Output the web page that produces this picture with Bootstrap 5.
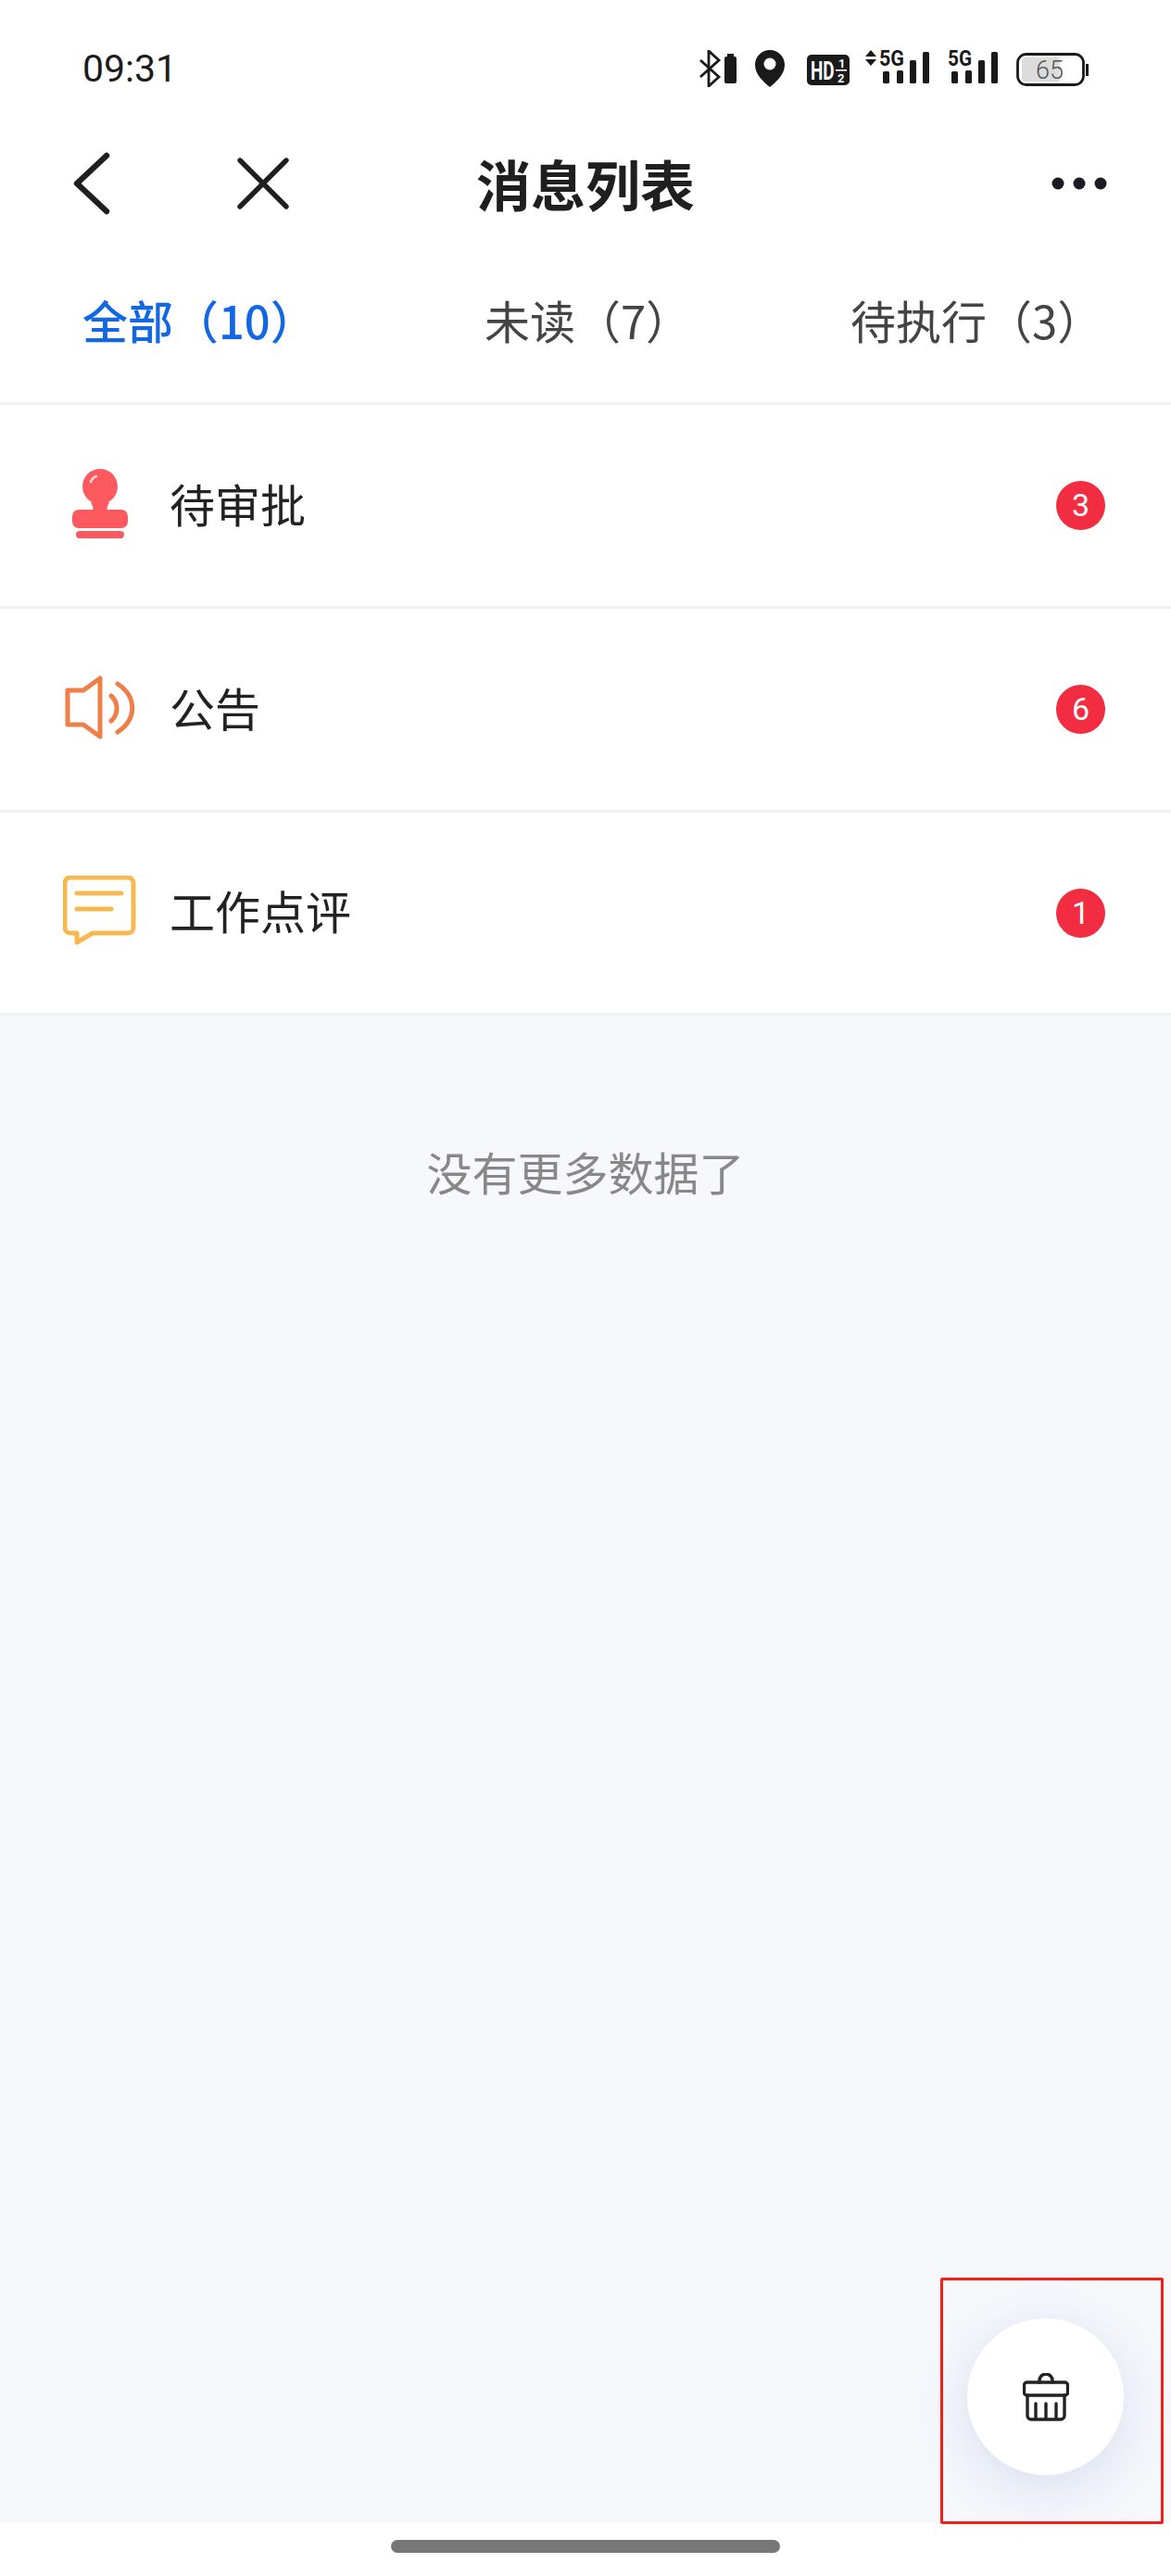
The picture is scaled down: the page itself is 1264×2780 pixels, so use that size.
<!DOCTYPE html>
<html lang="zh-CN">
<head>
    <meta charset="UTF-8">
    <meta name="viewport" content="width=device-width, initial-scale=1.0">
    <title>消息列表</title>
    <link href="https://cdn.jsdelivr.net/npm/bootstrap@5.3.0/dist/css/bootstrap.min.css" rel="stylesheet">
    <style>
        body {
            margin: 0;
            background-color: #fff;
            font-family: "Noto Sans CJK SC", "Noto Sans", sans-serif;
        }
        .phone-page { width: 1264px; height: 2780px; }
        .status-strip { height: 130px; padding: 54px 89px 0; }
        .status-time { font-family: Roboto, sans-serif; font-size: 41px; line-height: 40px; color: #1c1c1c; }
        .status-icons svg { display: block; height: 40px; }
        .status-icons .sig-icon { height: 46px; margin-top: -6px; }
        .status-label { font-family: Roboto, sans-serif; font-weight: 700; }
        .gap-pin { margin-left: 19px; }
        .gap-hd { margin-left: 24px; }
        .gap-sig1 { margin-left: 17px; }
        .gap-sig2 { margin-left: 20px; }
        .top-bar { height: 135px; padding-right: 69px; }
        .back-btn { width: 120px; padding-left: 78px; }
        .close-btn { margin-left: 135px; }
        .page-title { font-size: 59px; font-weight: 700; color: #1f1f1f; line-height: 1; top: 0; left: 0; right: 0; }
        .tab-strip { height: 172px; padding: 0 0 10px 5px; border-bottom: 3px solid #eff0f2; }
        .tab-item { font-size: 49px; line-height: 1; color: #444; }
        .tab-on { color: #1267e3; font-weight: 500; }
        .msg-list { --bs-list-group-border-color: #eff0f2; --bs-list-group-border-width: 3px; border-bottom: 3px solid #eff0f2; }
        .msg-row { height: 220px; padding: 0 71px 0 68px; font-size: 49px; color: #222; }
        .msg-row:last-child { height: 216px; }
        .msg-name { padding-bottom: 6px; }
        .msg-icon { width: 80px; height: 80px; margin-right: 35px; }
        .msg-count { width: 53px; height: 53px; padding: 0; background: #f22c41; color: #fff; font-family: Roboto, sans-serif; font-size: 34px; font-weight: 400; line-height: 53px; }
        .list-end { background: #f6f8fc; }
        .no-more { padding-top: 143px; font-size: 49px; line-height: 50px; color: #888; }
        .home-strip { height: 57px; }
        .home-pill { width: 420px; height: 14px; background: #777; margin-top: 18px; }
        .float-btn { width: 169px; height: 169px; left: 1044px; top: 2502px; box-shadow: 0 14px 56px rgba(165, 182, 215, .38); }
        .mark-box { left: 1015px; top: 2458px; width: 241px; height: 266px; border: 3px solid #f3201a; border-radius: 2px; }
    </style>
</head>
<body>
<div class="phone-page position-relative d-flex flex-column overflow-hidden">

    <!-- status bar -->
    <div class="status-strip d-flex justify-content-between align-items-start">
        <div class="status-time">09:31</div>
        <div class="status-icons d-flex">
            <svg width="41" viewBox="0 0 41 40">
                <path d="M1 11 21 29 10 39V1L21 11 1 29" fill="none" stroke="#1a1a1a" stroke-width="2.8"/>
                <rect x="30" y="4" width="7" height="4" fill="#1a1a1a"/>
                <rect x="27" y="7" width="13" height="29" rx="2" fill="#1a1a1a"/>
            </svg>
            <svg width="32" class="gap-pin" viewBox="0 0 32 40">
                <path d="M16 0C7 0 0 7 0 16 0 27 10 35 16 40 22 35 32 27 32 16 32 7 25 0 16 0Z" fill="#1a1a1a"/>
                <circle cx="16" cy="15" r="6.5" fill="#fff"/>
            </svg>
            <svg width="46" class="sig-icon gap-hd" viewBox="0 -6 46 46">
                <rect y="5" width="46" height="33" rx="5" fill="#1a1a1a"/>
                <text class="status-label" transform="translate(4 32) scale(.7 1)" font-size="27" fill="#fff">HD</text>
                <text class="status-label" x="34" y="19" font-size="13" fill="#fff">1</text>
                <rect x="31" y="21" width="12" height="1.6" fill="#fff"/>
                <text class="status-label" x="33" y="35" font-size="13" fill="#fff">2</text>
            </svg>
            <svg width="69" class="sig-icon gap-sig1" viewBox="0 -6 69 46">
                <path d="M6 0 0 7H12ZM6 17 0 10H12Z" fill="#1a1a1a"/>
                <text class="status-label" x="15" y="17" font-size="23" fill="#1a1a1a" textLength="27" lengthAdjust="spacingAndGlyphs">5G</text>
                <rect x="19" y="23" width="7" height="13" rx="1.5" fill="#1a1a1a"/>
                <rect x="34" y="22" width="7" height="14" rx="1.5" fill="#1a1a1a"/>
                <rect x="48" y="11" width="7" height="25" rx="1.5" fill="#1a1a1a"/>
                <rect x="62" y="2" width="7" height="34" rx="1.5" fill="#1a1a1a"/>
            </svg>
            <svg width="54" class="sig-icon gap-sig2" viewBox="0 -6 54 46">
                <text class="status-label" x="0" y="17" font-size="23" fill="#1a1a1a" textLength="26" lengthAdjust="spacingAndGlyphs">5G</text>
                <rect x="4" y="23" width="7" height="13" rx="1.5" fill="#1a1a1a"/>
                <rect x="19" y="22" width="7" height="14" rx="1.5" fill="#1a1a1a"/>
                <rect x="33" y="11" width="7" height="25" rx="1.5" fill="#1a1a1a"/>
                <rect x="47" y="2" width="7" height="34" rx="1.5" fill="#1a1a1a"/>
            </svg>
            <svg width="78" class="sig-icon gap-sig2" viewBox="0 -6 78 46">
                <rect x="1.5" y="4.5" width="71" height="33" rx="9" fill="#fff" stroke="#1a1a1a" stroke-width="2.8"/>
                <rect x="6" y="8" width="41" height="26" rx="3" fill="#dcdcdc"/>
                <text x="36" y="31" font-family="Roboto, sans-serif" font-weight="300" font-size="27" fill="#555" text-anchor="middle">65</text>
                <rect x="75" y="15" width="3" height="13" fill="#1a1a1a"/>
            </svg>
        </div>
    </div>

    <!-- title bar -->
    <div class="top-bar position-relative d-flex align-items-center justify-content-between">
        <div class="d-flex align-items-center">
            <div class="back-btn">
                <svg class="d-block" width="42" height="68" viewBox="0 0 42 68"><path d="M37 4 5 34 37 64" fill="none" stroke="#1f1f1f" stroke-width="6.4" stroke-linecap="round" stroke-linejoin="round"/></svg>
            </div>
            <svg class="close-btn d-block" width="58" height="58" viewBox="0 0 58 58"><path d="M4 4 54 54M54 4 4 54" fill="none" stroke="#1f1f1f" stroke-width="5.4" stroke-linecap="round"/></svg>
        </div>
        <div class="page-title position-absolute h-100 d-flex align-items-center justify-content-center">消息列表</div>
        <svg class="d-block position-relative" width="60" height="14" viewBox="0 0 60 14"><circle cx="7" cy="7" r="6.5" fill="#1b1b24"/><circle cx="30" cy="7" r="6.5" fill="#1b1b24"/><circle cx="53" cy="7" r="6.5" fill="#1b1b24"/></svg>
    </div>

    <!-- tabs -->
    <div class="tab-strip row g-0 align-items-center">
        <div class="col-4 text-center tab-item tab-on">全部（10）</div>
        <div class="col-4 text-center tab-item">未读（7）</div>
        <div class="col-4 text-center tab-item">待执行（3）</div>
    </div>

    <!-- messages -->
    <div class="msg-list list-group list-group-flush">
        <div class="list-group-item msg-row d-flex align-items-center">
            <svg class="msg-icon flex-shrink-0" viewBox="0 0 80 80">
                <path d="M30 36C32 40 33 42 32 46H48C47 42 48 40 50 36Z" fill="#fd5a5f"/>
                <circle cx="40" cy="19" r="19" fill="#fd5a5f"/>
                <path d="M30 14C31 11 33 9 36 8" fill="none" stroke="#ffd4d5" stroke-width="2.5" stroke-linecap="round"/>
                <rect x="10" y="44" width="60" height="20" rx="7" fill="#fd5a5f"/>
                <rect x="14" y="67" width="52" height="8" rx="4" fill="#fd5a5f"/>
            </svg>
            <span class="msg-name flex-grow-1">待审批</span>
            <span class="badge rounded-circle msg-count">3</span>
        </div>
        <div class="list-group-item msg-row d-flex align-items-center">
            <svg class="msg-icon flex-shrink-0" viewBox="0 0 80 80">
                <path d="M5 19H22L40 6V69L22 56H5Z" fill="none" stroke="#ee7f48" stroke-width="5" stroke-linejoin="round"/>
                <path d="M52 25C60 32 60 45 52 52M59 12C80 26 80 50 59 64" fill="none" stroke="#ee7f48" stroke-width="5" stroke-linecap="round"/>
            </svg>
            <span class="msg-name flex-grow-1">公告</span>
            <span class="badge rounded-circle msg-count">6</span>
        </div>
        <div class="list-group-item msg-row d-flex align-items-center">
            <svg class="msg-icon flex-shrink-0" viewBox="0 0 80 80">
                <path d="M8 2H70A6 6 0 0 1 76 8V56A6 6 0 0 1 70 62H32L15 72V62H8A6 6 0 0 1 2 56V8A6 6 0 0 1 8 2Z" fill="none" stroke="#f6b94f" stroke-width="5" stroke-linejoin="round"/>
                <path d="M15 19H63M15 36H52" fill="none" stroke="#f6b94f" stroke-width="5" stroke-linecap="round"/>
            </svg>
            <span class="msg-name flex-grow-1">工作点评</span>
            <span class="badge rounded-circle msg-count">1</span>
        </div>
    </div>

    <div class="list-end flex-grow-1 text-center">
        <div class="no-more">没有更多数据了</div>
    </div>

    <div class="home-strip d-flex justify-content-center">
        <div class="home-pill rounded-pill"></div>
    </div>

    <!-- floating button + highlight frame -->
    <div class="float-btn position-absolute rounded-circle bg-white d-flex align-items-center justify-content-center">
        <svg width="50" height="52" viewBox="0 0 50 52" fill="none" stroke="#222" stroke-width="3.4" stroke-linecap="round" stroke-linejoin="round">
            <path d="M18 10V8A7 7 0 0 1 32 8V10"/>
            <rect x="1.5" y="10" width="47" height="14" rx="3"/>
            <path d="M5 24V46A4 4 0 0 0 9 50H41A4 4 0 0 0 45 46V24M14 33V50M25 33V50M36 33V50"/>
        </svg>
    </div>
    <div class="mark-box position-absolute"></div>
</div>
<script src="https://cdn.jsdelivr.net/npm/bootstrap@5.3.0/dist/js/bootstrap.bundle.min.js"></script>
</body>
</html>
